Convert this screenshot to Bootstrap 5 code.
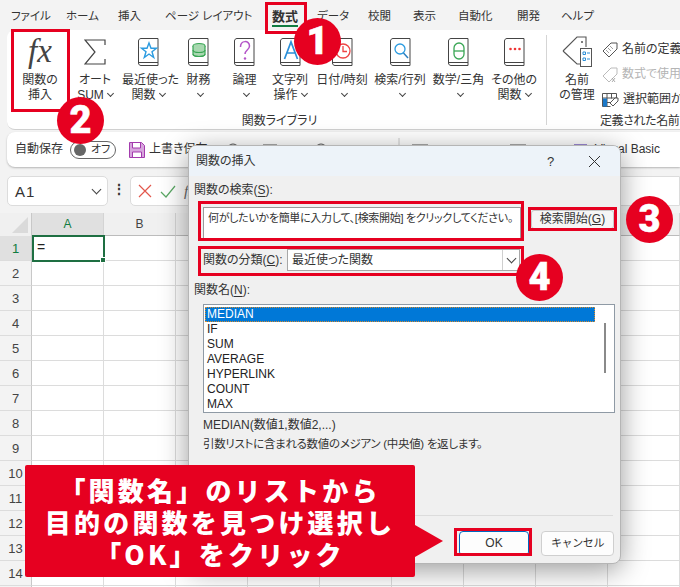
<!DOCTYPE html>
<html lang="ja">
<head>
  <meta charset="UTF-8">
  <meta name="viewport" content="width=device-width, initial-scale=1.0">
  <title>関数の挿入</title>
  <link href="https://cdn.jsdelivr.net/npm/bootstrap@5.3.0/dist/css/bootstrap.min.css" rel="stylesheet">
  <style>
    body {
      width: 680px; height: 587px; overflow: hidden; position: relative;
      background: #f3f3f3; color: #333; font-size: 12px; line-height: 15px;
      font-family: "Liberation Sans", "Noto Sans CJK JP", sans-serif;
      font-feature-settings: "palt";
    }
    /* tabs */
    .xl-tabs { height: 30px; padding: 2px 0 0 11px; font-size: 11.5px; }
    .xl-tab { position: relative; white-space: nowrap; flex: none; }
    .xl-tab-on { font-weight: 700; font-size: 13px; }
    .xl-tab-on::after { content: ""; position: absolute; left: 0; width: 26px; top: 16px; height: 2px; background: #107c41; }
    .tw-44 { width: 44px; }
    .tw-45 { width: 45px; }
    .tw-47 { width: 47px; }
    .tw-51 { width: 51px; }
    .tw-52 { width: 52px; }
    .tw-55 { width: 55px; }
    .tw-59 { width: 59px; }
    .tw-107 { width: 107px; }
    /* ribbon */
    .xl-ribbon { height: 100px; margin-left: 7px; background: #fff; border-radius: 8px 0 0 8px; border-bottom: 1px solid #d0d0d0; padding-left: 5px; }
    .rb { flex: none; white-space: nowrap; text-align: center; padding-top: 6px; }
    .rb-ico { height: 31px; display: flex; align-items: center; justify-content: center; margin-bottom: 6px; }
    .rb-fx { font-family: "Liberation Serif", serif; font-style: italic; font-size: 33px; line-height: 31px; color: #444; }
    .chev { display: inline-block; width: 5px; height: 5px; border-right: 1px solid #444; border-bottom: 1px solid #444; transform: rotate(45deg); margin: 0 0 3px 4px; }
    .rb-sep { width: 1px; height: 90px; background: #d5d5d5; margin: 5px 0 0 5px; flex: none; }
    .rb-libcap { width: 529px; text-align: center; padding-left: 6px; }
    .rb-main { height: 84px; }
    .rb-mgr { width: 50px; margin-left: 5px; }
    .xl-names { padding-top: 7px; white-space: nowrap; }
    .xl-name-row { height: 25px; display: flex; align-items: center; gap: 4px; }
    .xl-muted { color: #b4b4b4; }
    .xl-defcap { padding-left: 53px; white-space: nowrap; letter-spacing: -.4px; }
    /* quick access */
    .xl-qat { height: 35px; margin: 2px 0 0 7px; background: #fff; border-radius: 8px 0 0 8px; box-shadow: 0 1px 2px rgba(0,0,0,.25); padding-left: 8px; white-space: nowrap; }
    .xl-toggle { width: 46px; height: 18px; border: 1px solid #666; border-radius: 9px; margin: 0 13px 0 7px; padding: 0 0 0 3px; flex: none; font-size: 11px; gap: 5px; }
    .xl-knob { width: 12px; height: 12px; border-radius: 50%; background: #666; }
    .qat-save { width: 77px; }
    .qat-peek { flex: none; overflow: visible; }
    .qat-vba { margin-left: auto; margin-right: 20px; }
    /* formula bar */
    .xl-fbar { height: 30px; margin: 9px 0 7px 7px; }
    .xl-namebox { width: 101px; background: #fff; border: 1px solid #dcdcdc; border-radius: 5px; padding: 0 7px; font-size: 15px; letter-spacing: 1px; }
    .xl-namebox .chev { width: 7px; height: 7px; }
    .xl-dots { width: 22px; text-align: center; font-weight: 700; font-size: 14px; line-height: 26px; }
    .xl-fbox { flex: 1; background: #fff; border: 1px solid #dcdcdc; border-radius: 5px 0 0 5px; padding-left: 7px; gap: 8px; }
    .xl-fxmark { font-family: "Liberation Serif", serif; font-style: italic; font-size: 15px; color: #666; }
    /* sheet */
    .sh-row { height: 25px; }
    .sh-head { height: 23px; }
    .sh-corner { width: 32px; flex: none; background: #f0f0f0; position: relative; border-right: 1px solid #c8c8c8; }
    .sh-corner::after { content: ""; position: absolute; right: 3px; bottom: 3px; border-style: solid; border-width: 0 0 16px 16px; border-color: transparent transparent #dadada transparent; }
    .sh-num { width: 32px; flex: none; text-align: center; line-height: 25px; font-size: 13px; background: #f3f3f3; border-right: 1px solid #c8c8c8; border-bottom: 1px solid #dcdcdc; color: #444; }
    .sh-col { width: 72px; flex: none; text-align: center; line-height: 22px; font-size: 12px; background: #f0f0f0; border-right: 1px solid #d4d4d4; border-bottom: 1px solid #bcbcbc; color: #444; }
    .sh-sel { background: #e0e0e0; color: #107c41; }
    .sh-cell { width: 72px; flex: none; background: #fff; border-right: 1px solid #dcdcdc; border-bottom: 1px solid #dcdcdc; }
    .sh-active { position: absolute; left: 32px; top: 235px; width: 73px; height: 27px; border: 2px solid #1e6f42; padding: 3px 0 0 3px; font-size: 14px; color: #222; }
    .sh-active::after { content: ""; position: absolute; right: -3px; bottom: -3px; width: 6px; height: 6px; background: #1e6f42; border: 1px solid #fff; }
    /* dialog */
    .fn-dlg { position: absolute; left: 188px; top: 145px; width: 433px; height: 419px; background: #f0f0f0; border-radius: 8px; border: 1px solid #b5b5b5; box-shadow: 0 6px 28px rgba(0,0,0,.4); overflow: hidden; }
    .fn-title { height: 30px; background: #edf3f9; padding: 0 0 0 7px; }
    .fn-title-q { margin-left: auto; width: 45px; text-align: center; font-size: 13px; }
    .fn-title-x { width: 43px; text-align: center; margin-right: 4px; }
    .fn-body { padding: 7px 5px 0 5px; }
    .fn-lbl { height: 16px; }
    .fn-lbl u { text-underline-offset: 2px; }
    .fn-input { width: 318px; height: 34px; margin: 8px 0 0 9px; background: #fff; border: 1px solid #9a9a9a; padding: 3px 4px; white-space: nowrap; overflow: hidden; font-size: 11px; letter-spacing: -.3px; }
    .fn-srch { width: 83px; height: 19px; margin: 11px 0 0 10px; padding: 0; background: #f5f5f5; border: 1px solid #c8c8c8; border-radius: 3px; font-size: 12px; line-height: 15px; color: #333; }
    .fn-cat { margin: 8px 0 0 9px; height: 22px; }
    .fn-cat-lbl { width: 84px; }
    .fn-select { width: 233px; height: 22px; background: #fff; border: 1px solid #a8a8a8; padding-left: 4px; }
    .fn-select-btn { margin-left: auto; width: 17px; height: 100%; border-left: 1px solid #cfcfcf; display: flex; align-items: center; justify-content: center; }
    .fn-select-btn .chev { margin: 0 0 3px; width: 7px; height: 7px; }
    .fn-listbox { width: 412px; height: 109px; margin: 9px 0 0 9px; background: #fff; border: 1px solid #8f9aa5; padding: 2px 19px 0 1px; position: relative; }
    .fn-listbox .list-group-item { padding: 0 0 0 2px; height: 15px; line-height: 15px; border: 0; background: transparent; color: #222; font-size: 12px; border-radius: 0; }
    .fn-listbox .list-group-item.active { background: #0078d7; color: #fff; outline: 1px dotted #d98a2b; outline-offset: -1px; }
    .fn-scroll { position: absolute; right: 8px; top: 18px; width: 2px; height: 50px; background: #8a8a8a; }
    .fn-desc { margin: 3px 0 0 9px; }
    .fn-desc div { height: 19px; line-height: 19px; }
    .fn-desc .fn-desc-long { font-size: 11.5px; letter-spacing: -.3px; }
    .fn-foot { position: absolute; left: 220px; right: 7px; top: 369px; border-top: 1px solid #dcdcdc; padding-top: 15px; justify-content: flex-end; gap: 12px; }
    .fn-ok, .fn-cancel { height: 25px; padding: 0; font-size: 12px; line-height: 15px; border-radius: 4px; color: #333; background: #fdfdfd; }
    .fn-ok { width: 70px; border: 1px solid #0067c0; }
    .fn-cancel { width: 73px; border: 1px solid #cfcfcf; margin-right: -1px; font-size: 11px; letter-spacing: -.4px; }
    /* annotations */
    .mk-box { position: absolute; border: 3px solid #e60020; pointer-events: none; }
    .mk-tab { left: 265px; top: 2px; width: 42px; height: 32px; }
    .mk-fx { left: 11px; top: 29px; width: 59px; height: 83px; }
    .mk-srch { left: 198px; top: 201px; width: 326px; height: 40px; }
    .mk-go { left: 528px; top: 207px; width: 89px; height: 24px; }
    .mk-cat { left: 198px; top: 246px; width: 326px; height: 30px; }
    .mk-ok { left: 454px; top: 528px; width: 78px; height: 28px; }
    .mk-num { position: absolute; width: 47px; height: 47px; border-radius: 50%; background: #e60020; color: #fff; font-family: "Roboto", sans-serif; font-weight: 900; font-size: 38px; line-height: 47px; text-align: center; -webkit-text-stroke: .5px #fff; }
    .mk-1 { left: 294px; top: 18px; }
    .mk-2 { left: 57px; top: 97px; }
    .mk-3 { left: 626px; top: 196px; }
    .mk-4 { left: 516px; top: 254px; }
    .mk-callout { position: absolute; left: 25px; top: 465px; width: 390px; height: 112px; background: #e60020; color: #fff; border-radius: 2px; text-align: center; font-family: "Noto Sans CJK JP", sans-serif; font-feature-settings: normal; font-weight: 900; font-size: 26px; line-height: 32px; letter-spacing: 3.2px; padding-top: 9px; white-space: nowrap; }
    .mk-callout::after { content: ""; position: absolute; left: 390px; top: 60px; border-style: solid; border-width: 16px 0 16px 28px; border-color: transparent transparent transparent #e60020; }
    .rb-43 { width: 43px; }
    .rb-48 { width: 48px; }
    .rb-49 { width: 49px; }
    .rb-52 { width: 52px; }
    .rb-54 { width: 54px; }
    .rb-56 { width: 56px; }
    .rb-57 { width: 57px; }
    .rb-60 { width: 60px; }
  </style>
</head>
<body>
  <svg width="0" height="0" class="position-absolute">
    <symbol id="book" viewBox="0 0 21 28">
      <path d="M3 .5h17v27H3C1.6 27.500.5 26.500.5 25V3C.5 1.600 1.600.5 3 .5zM.8 24.500H20" fill="#fff" stroke="#444" stroke-width="1"/>
    </symbol>
  </svg>

  <!-- Tabs -->
  <div class="xl-tabs d-flex align-items-center">
    <span class="xl-tab tw-55">ファイル</span>
    <span class="xl-tab tw-52">ホーム</span>
    <span class="xl-tab tw-47">挿入</span>
    <span class="xl-tab tw-107">ページ レイアウト</span>
    <span class="xl-tab xl-tab-on tw-45">数式</span>
    <span class="xl-tab tw-51">データ</span>
    <span class="xl-tab tw-45">校閲</span>
    <span class="xl-tab tw-45">表示</span>
    <span class="xl-tab tw-59">自動化</span>
    <span class="xl-tab tw-44">開発</span>
    <span class="xl-tab">ヘルプ</span>
  </div>

  <!-- Ribbon -->
  <div class="xl-ribbon d-flex">
    <div>
      <div class="rb-main d-flex">
        <div class="rb rb-56"><div class="rb-ico rb-fx">fx</div>関数の<br>挿入</div>
        <div class="rb rb-54"><div class="rb-ico">
          <svg width="22" height="26" viewBox="0 0 22 26"><path d="M21 6V1H1l10 12L1 25h20v-5" fill="none" stroke="#444" stroke-width="1.200"/></svg>
        </div>オート<br>SUM<i class="chev"></i></div>
        <div class="rb rb-52"><div class="rb-ico">
          <svg width="21" height="28" viewBox="0 0 21 28"><use href="#book"/><path d="M11 5l2 5.300h5.500l-4.500 3.500 1.700 5.700L11 16l-4.700 3.500L8 13.800 3.500 10.300H9z" fill="none" stroke="#2b9be0" stroke-width="1.400"/></svg>
        </div>最近使った<br>関数<i class="chev"></i></div>
        <div class="rb rb-49"><div class="rb-ico">
          <svg width="21" height="28" viewBox="0 0 21 28"><use href="#book"/><g fill="#a8d8b0" stroke="#3aa655" stroke-width="1.200"><ellipse cx="11" cy="8" rx="6" ry="2.500"/><path d="M5 8v8c0 3.300 12 3.300 12 0V8"/><path d="M5 12c0 3.300 12 3.300 12 0M5 16c0 3.300 12 3.300 12 0" fill="none"/></g></svg>
        </div>財務<br><i class="chev"></i></div>
        <div class="rb rb-43"><div class="rb-ico">
          <svg width="21" height="28" viewBox="0 0 21 28"><use href="#book"/><path d="M6.500 9c0-7 9-7 9-1 0 4-4.500 4-4.500 8" fill="none" stroke="#b455c8" stroke-width="1.500"/><circle cx="11" cy="20.500" r="1.200" fill="#b455c8"/></svg>
        </div>論理<br><i class="chev"></i></div>
        <div class="rb rb-48"><div class="rb-ico">
          <svg width="21" height="28" viewBox="0 0 21 28"><use href="#book"/><path d="M4.500 21L11 4l6.500 17M6.800 15h8.400" fill="none" stroke="#2b8fd8" stroke-width="1.700"/></svg>
        </div>文字列<br>操作<i class="chev"></i></div>
        <div class="rb rb-56"><div class="rb-ico">
          <svg width="21" height="28" viewBox="0 0 21 28"><use href="#book"/><circle cx="11" cy="13" r="7" fill="none" stroke="#ee4444" stroke-width="1.300"/><path d="M11 8v5.500h4" fill="none" stroke="#ee4444" stroke-width="1.300"/></svg>
        </div>日付/時刻<br><i class="chev"></i></div>
        <div class="rb rb-60"><div class="rb-ico">
          <svg width="21" height="28" viewBox="0 0 21 28"><use href="#book"/><circle cx="10" cy="11" r="5" fill="none" stroke="#2b9be0" stroke-width="1.300"/><path d="M13.500 15l4.500 5" stroke="#2b7fc0" stroke-width="1.500"/></svg>
        </div>検索/行列<br><i class="chev"></i></div>
        <div class="rb rb-57"><div class="rb-ico">
          <svg width="21" height="28" viewBox="0 0 21 28"><use href="#book"/><rect x="6" y="5" width="10" height="16" rx="5" fill="none" stroke="#3aa655" stroke-width="1.300"/><path d="M6 13h10" stroke="#3aa655" stroke-width="1.300"/></svg>
        </div>数学/三角<br><i class="chev"></i></div>
        <div class="rb rb-54"><div class="rb-ico">
          <svg width="21" height="28" viewBox="0 0 21 28"><use href="#book"/><g fill="#ee3333"><circle cx="6.500" cy="11" r="1.300"/><circle cx="11" cy="11" r="1.300"/><circle cx="15.500" cy="11" r="1.300"/></g></svg>
        </div>その他の<br>関数<i class="chev"></i></div>
      </div>
      <div class="rb-libcap">関数ライブラリ</div>
    </div>
    <div class="rb-sep"></div>
    <div>
      <div class="rb-main d-flex">
        <div class="rb rb-mgr"><div class="rb-ico">
          <svg width="30" height="31" viewBox="0 0 30 31"><path d="M1 15L15 1h9v10M18 28h-3L1 15" fill="none" stroke="#555" stroke-width="1.100"/><circle cx="20" cy="6" r="1" fill="#555"/><rect x="18.500" y="12.500" width="11" height="18" fill="#fff" stroke="#555"/><path d="M21 16h2.500v2.500H21zM21 22h2.500v2.500H21z" fill="none" stroke="#2b8fd8"/><path d="M25 17h3M25 23h3" stroke="#2b8fd8"/></svg>
        </div>名前<br>の管理</div>
        <div class="xl-names">
          <div class="xl-name-row"><svg width="16" height="16" viewBox="0 0 16 16"><path d="M1 9l8-8h6v6l-8 8z" fill="#fff" stroke="#555"/><path d="M8 4l3 3M6 6l3 3M4 8l3 3" stroke="#888" stroke-width=".8"/></svg>名前の定義</div>
          <div class="xl-name-row xl-muted"><svg width="16" height="16" viewBox="0 0 16 16"><path d="M1 9l8-8h6v6l-8 8z" fill="#fff" stroke="#bbb"/><path d="M10 15l3-4M13 15l-3-4" stroke="#999" stroke-width=".8"/></svg>数式で使用</div>
          <div class="xl-name-row"><svg width="17" height="16" viewBox="0 0 17 16"><path d="M.5 1.500h14v5M.5 1.500v13h8M.5 6h14M.5 10.500h8M5 1.500v13M9.500 1.500v5" fill="none" stroke="#555"/><rect x="1" y="6.500" width="4" height="8" fill="#1b78c8"/><path d="M8 11l5-5h3v3l-5 5z" fill="#fff" stroke="#555"/></svg>選択範囲か</div>
        </div>
      </div>
      <div class="xl-defcap">定義された名前</div>
    </div>
  </div>

  <!-- Quick access -->
  <div class="xl-qat d-flex align-items-center">
    <span>自動保存</span>
    <div class="xl-toggle d-flex align-items-center"><span class="xl-knob"></span><span>オフ</span></div>
    <svg width="16" height="16" viewBox="0 0 16 16" class="me-1 flex-shrink-0"><path d="M.5.500h12l3 3v12H.5z" fill="#d7a6dd" stroke="#a33bad"/><path d="M3.500 1v5h8V1M3.500 15v-5h9v5" fill="#fff" stroke="#a33bad"/></svg>
    <span class="qat-save">上書き保存</span>
    <svg class="qat-peek" width="362" height="14" viewBox="0 0 362 14"><g fill="none" stroke="#555"><circle cx="7" cy="7" r="6"/><path d="M37 2h14M89 7a6 6 0 0 1 12 0M186 2h16M284 2h16"/></g><path d="M173 -5v14" stroke="#ccc"/><path d="M348 1h13v12h-13z" fill="#9d8ad6"/></svg>
    <span class="qat-vba">Visual Basic</span>
  </div>

  <!-- Formula bar -->
  <div class="xl-fbar d-flex">
    <div class="xl-namebox d-flex align-items-center justify-content-between"><span>A1</span><i class="chev"></i></div>
    <div class="xl-dots">⋮</div>
    <div class="xl-fbox d-flex align-items-center">
      <svg width="14" height="14" viewBox="0 0 14 14"><path d="M1 1l12 12M13 1L1 13" stroke="#e2574c" stroke-width="1.200"/></svg>
      <svg width="16" height="13" viewBox="0 0 16 13"><path d="M1 7l5 5L15 1" fill="none" stroke="#5aa864" stroke-width="1.200"/></svg>
      <span class="xl-fxmark">fx</span>
    </div>
  </div>

  <!-- Sheet -->
  <div id="sheet"></div>
  <div class="sh-active">=</div>

  <!-- Insert function dialog -->
  <div class="fn-dlg">
    <div class="fn-title d-flex align-items-center">
      <span>関数の挿入</span>
      <span class="fn-title-q">?</span>
      <span class="fn-title-x">
        <svg width="13" height="13" viewBox="0 0 13 13"><path d="M1 1l11 11M12 1L1 12" stroke="#333" stroke-width="1"/></svg>
      </span>
    </div>
    <div class="fn-body">
      <div class="fn-lbl">関数の検索(<u>S</u>):</div>
      <div class="d-flex">
        <div class="fn-input">何がしたいかを簡単に入力して、[検索開始] をクリックしてください。</div>
        <button class="fn-srch" type="button">検索開始(<u>G</u>)</button>
      </div>
      <div class="fn-cat d-flex align-items-center">
        <span class="fn-cat-lbl">関数の分類(<u>C</u>):</span>
        <div class="fn-select d-flex align-items-center"><span>最近使った関数</span><span class="fn-select-btn"><i class="chev"></i></span></div>
      </div>
      <div class="fn-lbl mt-2 pt-1">関数名(<u>N</u>):</div>
      <div class="fn-listbox">
        <div class="list-group">
          <div class="list-group-item active">MEDIAN</div>
          <div class="list-group-item">IF</div>
          <div class="list-group-item">SUM</div>
          <div class="list-group-item">AVERAGE</div>
          <div class="list-group-item">HYPERLINK</div>
          <div class="list-group-item">COUNT</div>
          <div class="list-group-item">MAX</div>
        </div>
        <span class="fn-scroll"></span>
      </div>
      <div class="fn-desc">
        <div>MEDIAN(数値1,数値2,...)</div>
        <div class="fn-desc-long">引数リストに含まれる数値のメジアン (中央値) を返します。</div>
      </div>
    </div>
    <div class="fn-foot d-flex">
      <button class="fn-ok" type="button">OK</button>
      <button class="fn-cancel" type="button">キャンセル</button>
    </div>
  </div>

  <!-- Annotations -->
  <div class="mk-box mk-tab"></div>
  <div class="mk-box mk-fx"></div>
  <div class="mk-box mk-srch"></div>
  <div class="mk-box mk-go"></div>
  <div class="mk-box mk-cat"></div>
  <div class="mk-box mk-ok"></div>
  <div class="mk-num mk-1">1</div>
  <div class="mk-num mk-2">2</div>
  <div class="mk-num mk-3">3</div>
  <div class="mk-num mk-4">4</div>
  <div class="mk-callout">「関数名」のリストから<br>目的の関数を見つけ選択し<br>「OK」をクリック</div>

  <script src="https://cdn.jsdelivr.net/npm/bootstrap@5.3.0/dist/js/bootstrap.bundle.min.js"></script>
  <script>
    // build the grid
    const cols = ['A', 'B', 'C', 'D', 'E', 'F', 'G', 'H', 'I'];
    let html = '<div class="sh-head d-flex"><div class="sh-corner"></div>';
    cols.forEach((c, i) => {
      html += `<div class="sh-col ${i === 0 ? 'sh-sel' : ''}">${c}</div>`;
    });
    html += '</div>';
    // row 15 only shows its top edge in the window, so no number
    for (let r = 1; r <= 15; r++) {
      html += `<div class="sh-row d-flex"><div class="sh-num ${r === 1 ? 'sh-sel' : ''}">${r < 15 ? r : ''}</div>`;
      html += cols.map(() => '<div class="sh-cell"></div>').join('');
      html += '</div>';
    }
    document.getElementById('sheet').innerHTML = html;
  </script>
</body>
</html>
